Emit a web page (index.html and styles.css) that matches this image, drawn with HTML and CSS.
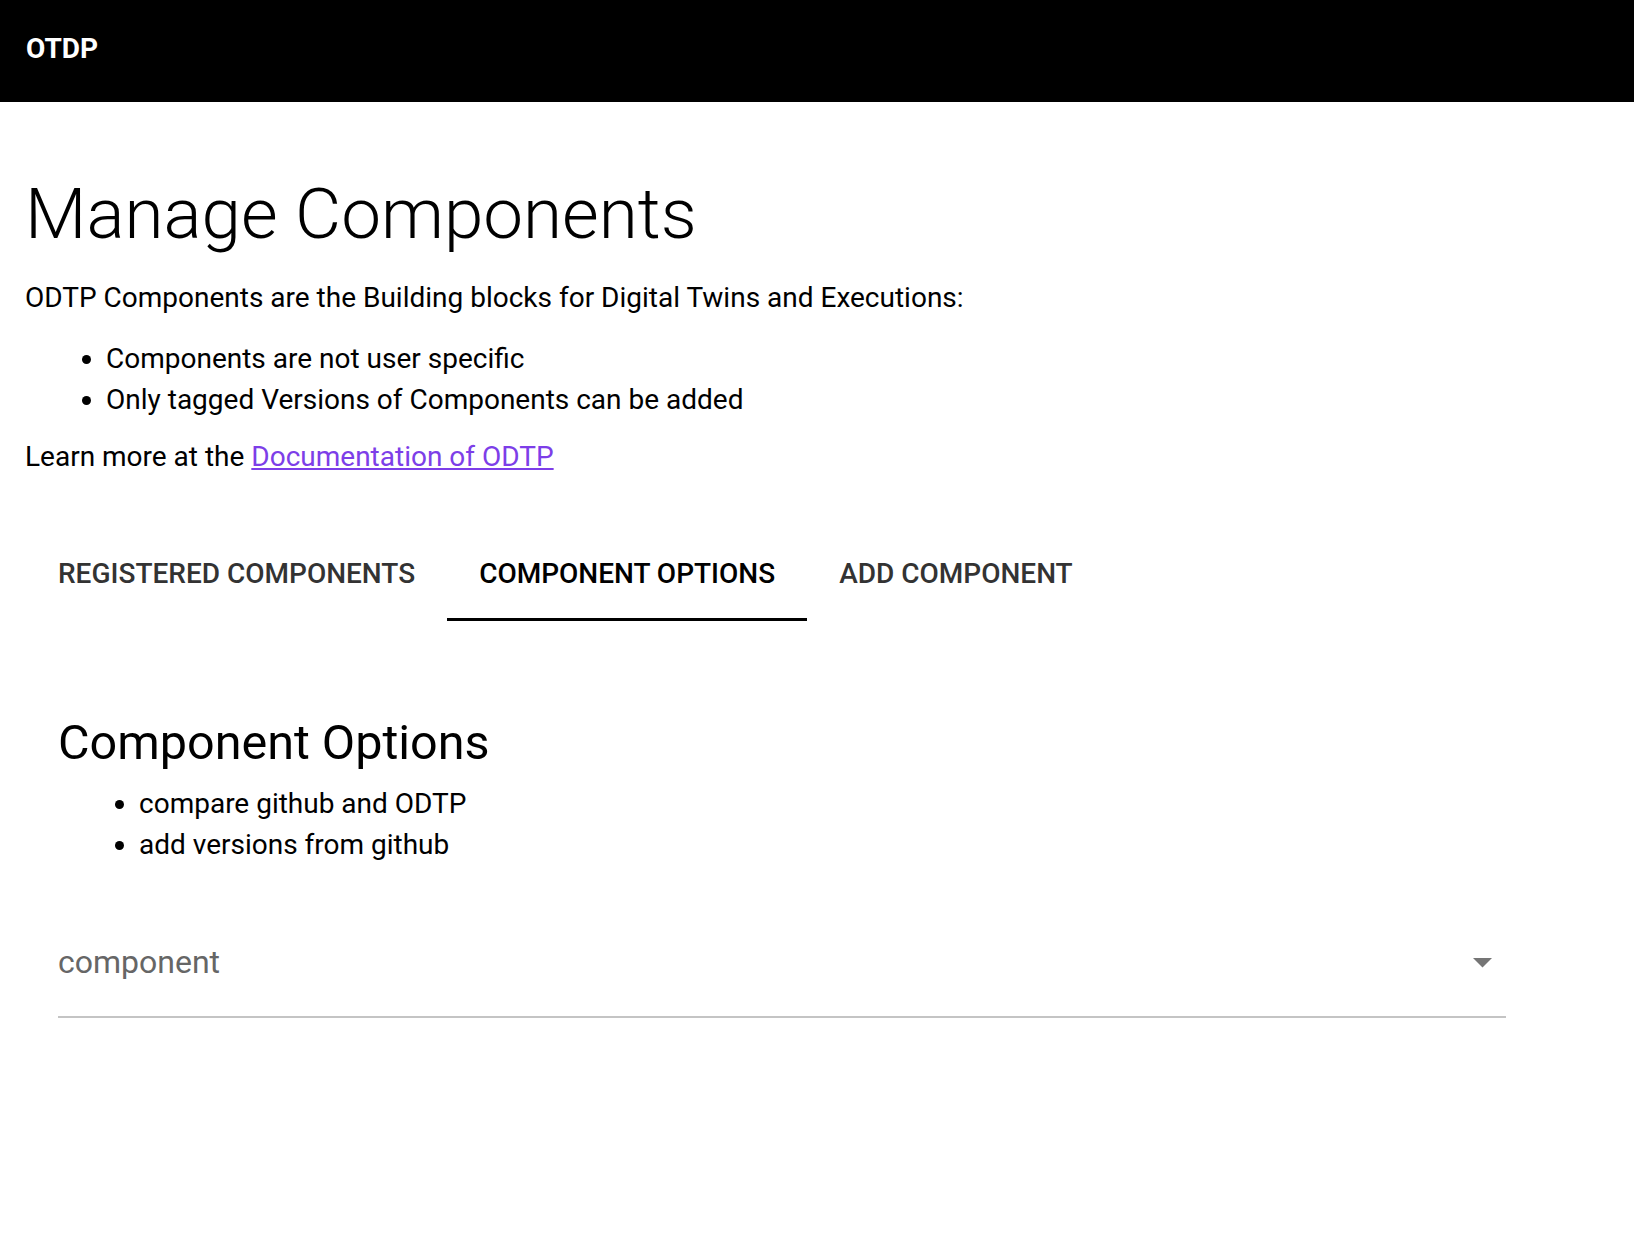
FILE: index.html
```html
<!DOCTYPE html>
<html lang="en">
<head>
<meta charset="utf-8">
<title>OTDP - Manage Components</title>
<link rel="stylesheet" href="styles.css">
</head>
<body>
<header class="topbar">
  <div class="brand">OTDP</div>
</header>
<main class="page">
  <h1 class="title">Manage Components</h1>
  <p class="para">ODTP Components are the Building blocks for Digital Twins and Executions:</p>
  <ul class="list">
    <li>Components are not user specific</li>
    <li>Only tagged Versions of Components can be added</li>
  </ul>
  <p class="para learn">Learn more at the <a class="doclink" href="#">Documentation of ODTP</a></p>

  <nav class="tabs">
    <div class="tab">REGISTERED COMPONENTS</div>
    <div class="tab active">COMPONENT OPTIONS</div>
    <div class="tab">ADD COMPONENT</div>
  </nav>

  <section class="panel">
    <h2 class="subtitle">Component Options</h2>
    <ul class="list sublist">
      <li>compare github and ODTP</li>
      <li>add versions from github</li>
    </ul>
    <div class="select">
      <span class="select-label">component</span>
      <svg class="caret" width="19" height="10" viewBox="0 0 19 10"><polygon points="0,0 19,0 9.5,9.5" fill="#757575"/></svg>
    </div>
  </section>
</main>
</body>
</html>
```
FILE: styles.css
```css
html, body {
  margin: 0;
  padding: 0;
  background: #fff;
}
body {
  font-family: Roboto, "Liberation Sans", sans-serif;
  color: #000;
}
.topbar {
  height: 102px;
  background: #000;
  display: flex;
  align-items: center;
  padding: 0 0 5px 26px;
  box-sizing: border-box;
}
.brand {
  color: #fff;
  font-weight: 700;
  font-size: 28px;
  line-height: 30px;
}
.page {
  padding: 0 25px;
}
.title {
  margin: 70px 0 0;
  font-weight: 300;
  font-size: 71px;
  line-height: 84px;
}
.para {
  margin: 24px 0 0;
  font-size: 28px;
  line-height: 36px;
}
.list {
  margin: 22px 0 0;
  padding-left: 81px;
  font-size: 28px;
  line-height: 41px;
}
.learn {
  margin-top: 19px;
}
.doclink {
  color: #7d3ee8;
  text-decoration: underline;
}
.tabs {
  display: flex;
  margin-top: 73px;
  padding-left: 1px;
}
.tab {
  padding: 11px 32px 0;
  height: 59px;
  font-size: 28px;
  line-height: 30px;
  font-weight: 500;
  color: #333;
  border-bottom: 3px solid transparent;
}
.tab.active {
  color: #000;
  border-bottom-color: #000;
}
.panel {
  padding: 0 33px;
}
.subtitle {
  margin: 94px 0 0;
  font-size: 48.5px;
  font-weight: 400;
  line-height: 56px;
}
.sublist {
  margin-top: 12px;
  padding-left: 81px;
}
.select {
  box-sizing: border-box;
  margin-top: 60px;
  max-width: 1448px;
  display: flex;
  justify-content: space-between;
  align-items: flex-start;
  padding: 17px 14px 34px 0;
  border-bottom: 2px solid #c4c4c4;
}
.select-label {
  font-size: 32px;
  line-height: 40px;
  color: #666;
}
.caret {
  margin-top: 16px;
  display: block;
}
```
